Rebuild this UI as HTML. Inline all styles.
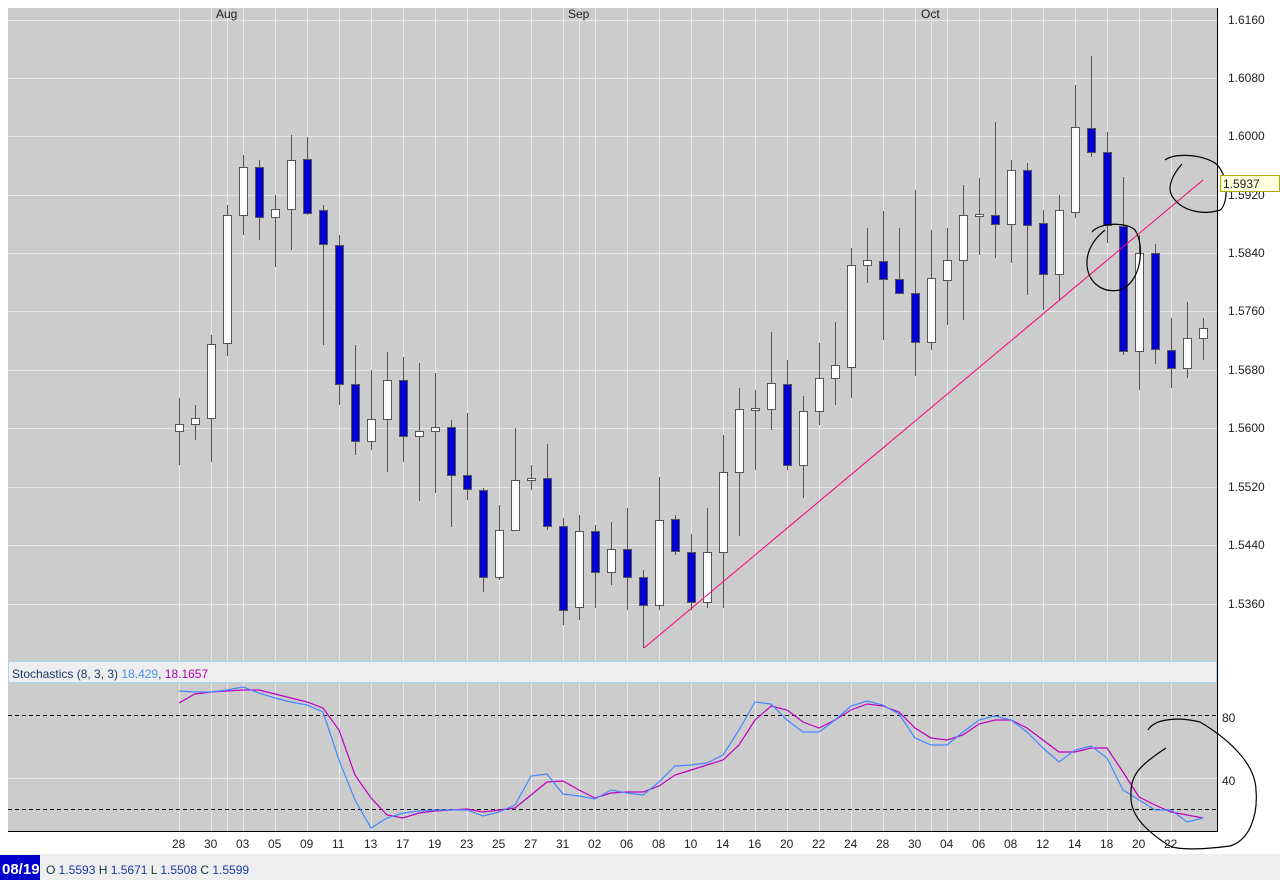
<!DOCTYPE html>
<html><head><meta charset="utf-8"><style>
body{margin:0;width:1280px;height:880px;overflow:hidden;background:#fff;font-family:"Liberation Sans",sans-serif}
svg{position:absolute;left:0;top:0}
text{font-family:"Liberation Sans",sans-serif;font-size:12px;fill:#222}
</style></head><body>
<svg width="1280" height="880" id="s">
<rect x="8" y="8" width="1209" height="823" fill="#cccccc"/>
<g id="grid" stroke="#e8e8e8" stroke-width="1"></g>
<line x1="8" y1="715.5" x2="1217" y2="715.5" stroke="#000" stroke-dasharray="4,3"/>
<line x1="8" y1="809.5" x2="1217" y2="809.5" stroke="#000" stroke-dasharray="4,3"/>
<line x1="1217.5" y1="8" x2="1217.5" y2="832" stroke="#000"/>
<line x1="8" y1="831.5" x2="1218" y2="831.5" stroke="#000"/>
<rect x="8.5" y="661.5" width="1208" height="21" fill="#eeeeee" stroke="#a8d8ec"/>
<text x="12" y="678"><tspan fill="#1a3a6a">Stochastics (8, 3, 3) </tspan><tspan fill="#4a8ef0">18.429</tspan><tspan fill="#1a3a6a">, </tspan><tspan fill="#b000b0">18.1657</tspan></text>
<g id="candles"></g>
<polyline id="mag" fill="none" stroke="#c000c0" stroke-width="1.2"/>
<polyline id="blu" fill="none" stroke="#4488ff" stroke-width="1.2"/>
<line x1="644" y1="648" x2="1203" y2="180" stroke="#ff0077" stroke-width="1"/>
<g fill="none" stroke="#000" stroke-width="1.2">
<path d="M1165,160 C1175,153 1200,154 1215,163 C1230,175 1228,205 1220,210 C1205,215 1185,212 1175,200 C1165,190 1172,175 1182,164"/>
<path d="M1092,232 C1100,222 1128,222 1135,230 C1145,245 1142,282 1120,290 C1100,294 1088,280 1087,265 C1086,250 1095,238 1105,230"/>
<path d="M1148,730 C1155,718 1180,717 1200,722 C1222,735 1255,760 1256,790 C1258,815 1250,840 1230,846 C1200,850 1175,850 1168,845 C1145,830 1130,815 1131,795 C1130,775 1140,765 1166,748"/>
</g>
<text x="216" y="18">Aug</text><text x="568" y="18">Sep</text><text x="921" y="18">Oct</text>
<g id="pl"></g>
<text x="1222" y="722">80</text><text x="1222" y="785">40</text>
<rect x="1220.5" y="175.5" width="59" height="16" fill="#ffffe0" stroke="#aaaa00"/>
<text x="1223" y="188">1.5937</text>
<g id="dl"></g>
<rect x="0" y="854" width="1280" height="26" fill="#eeeeee"/>
<rect x="0" y="855" width="40" height="25" fill="#0000cc"/>
<text x="2" y="874" style="fill:#fff;font-size:15px;font-weight:bold">08/19</text>
<text x="46" y="874"><tspan fill="#0d3a3a">O </tspan><tspan fill="#1a3aaa">1.5593 </tspan><tspan fill="#0d3a3a">H </tspan><tspan fill="#1a3aaa">1.5671 </tspan><tspan fill="#0d3a3a">L </tspan><tspan fill="#1a3aaa">1.5508 </tspan><tspan fill="#0d3a3a">C </tspan><tspan fill="#1a3aaa">1.5599</tspan></text>
</svg>
<script>
var NS="http://www.w3.org/2000/svg";
function el(t,a,p){var e=document.createElementNS(NS,t);for(var k in a)e.setAttribute(k,a[k]);document.getElementById(p).appendChild(e);return e;}
var g="grid";
var py=[20,78,136,195,253,311,370,428,487,545,604];
var pn=["1.6160","1.6080","1.6000","1.5920","1.5840","1.5760","1.5680","1.5600","1.5520","1.5440","1.5360"];
py.forEach(function(y,i){el("line",{x1:8,x2:1217,y1:y+.5,y2:y+.5},g);var t=el("text",{x:1228,y:y+4},"pl");t.textContent=pn[i];});
el("line",{x1:8,x2:1217,y1:778.5,y2:778.5},g);
var dn=["28","30","03","05","09","11","13","17","19","23","25","27","31","02","06","08","10","14","16","20","22","24","28","30","04","06","08","12","14","18","20","22"];
for(var i=0;i<32;i++){var x=179+32*i;el("line",{x1:x+.5,x2:x+.5,y1:8,y2:831},g);var t=el("text",{x:x-7,y:848},"dl");t.textContent=dn[i];}
[227,579,931].forEach(function(x){el("line",{x1:x+.5,x2:x+.5,y1:8,y2:831},g);});
var C=[[424,431,398,465,0],[418,424,405,440,0],[344,418,335,462,0],[215,343,205,356,0],[167,215,155,235,0],[167,217,160,240,1],[209,217,195,267,0],[160,209,135,250,0],[159,213,137,215,1],[210,244,205,345,1],[245,384,235,405,1],[384,441,345,455,1],[419,441,370,450,0],[380,419,352,472,0],[380,436,357,462,1],[431,436,363,501,0],[427,431,373,493,0],[427,475,420,527,1],[475,489,413,500,1],[490,577,488,592,1],[530,577,505,580,0],[480,530,428,530,0],[478,480,465,490,0],[478,526,444,530,1],[526,610,518,625,1],[531,607,515,620,0],[531,572,525,608,1],[549,572,522,585,0],[549,577,508,610,1],[577,605,570,648,1],[520,605,477,610,0],[519,551,515,555,1],[552,602,534,610,1],[552,602,508,608,0],[472,552,435,608,0],[409,472,388,536,0],[408,410,390,470,0],[383,409,332,430,0],[384,465,360,470,1],[411,465,396,498,0],[378,411,343,425,0],[365,378,322,405,0],[265,367,248,398,0],[260,265,228,283,0],[261,279,211,340,1],[279,293,228,289,1],[293,342,190,376,1],[278,342,230,350,0],[260,280,228,325,0],[215,260,185,320,0],[214,215,178,255,0],[215,224,122,258,1],[170,224,160,263,0],[170,225,163,295,1],[223,274,210,310,1],[210,274,195,300,0],[127,212,85,218,0],[128,152,56,157,1],[152,225,132,243,1],[226,351,177,355,1],[253,351,235,390,0],[253,349,244,364,1],[350,368,318,388,1],[338,368,302,378,0],[328,338,318,360,0]];
C.forEach(function(c,i){var x=179+16*i;el("line",{x1:x+.5,x2:x+.5,y1:c[2],y2:c[3],stroke:"#555"},"candles");
el("rect",{x:x-3.5,y:c[0]+.5,width:8,height:Math.max(c[1]-c[0],2),fill:c[4]?"#0000cc":"#fff",stroke:"#555"},"candles");});
var B=[691,692,692,690,687,693,698,702,705,712,760,800,828,818,813,811,810,810,810,816,812,805,776,774,794,796,799,790,793,795,782,766,765,763,755,730,702,704,720,732,732,720,706,701,705,714,738,745,745,732,720,716,720,732,748,762,750,746,758,790,800,810,810,822,818];
var M=[703,694,692,691,690,690,694,698,702,708,730,775,798,815,818,813,811,810,809,812,810,808,795,782,781,790,798,793,792,792,786,775,770,765,760,745,720,706,710,722,728,720,710,704,706,712,728,738,740,735,724,720,720,728,740,752,752,748,748,772,797,805,812,815,818];
document.getElementById("blu").setAttribute("points",B.map(function(y,i){return (179+16*i)+","+y}).join(" "));
document.getElementById("mag").setAttribute("points",M.map(function(y,i){return (179+16*i)+","+y}).join(" "));
</script>
</body></html>
